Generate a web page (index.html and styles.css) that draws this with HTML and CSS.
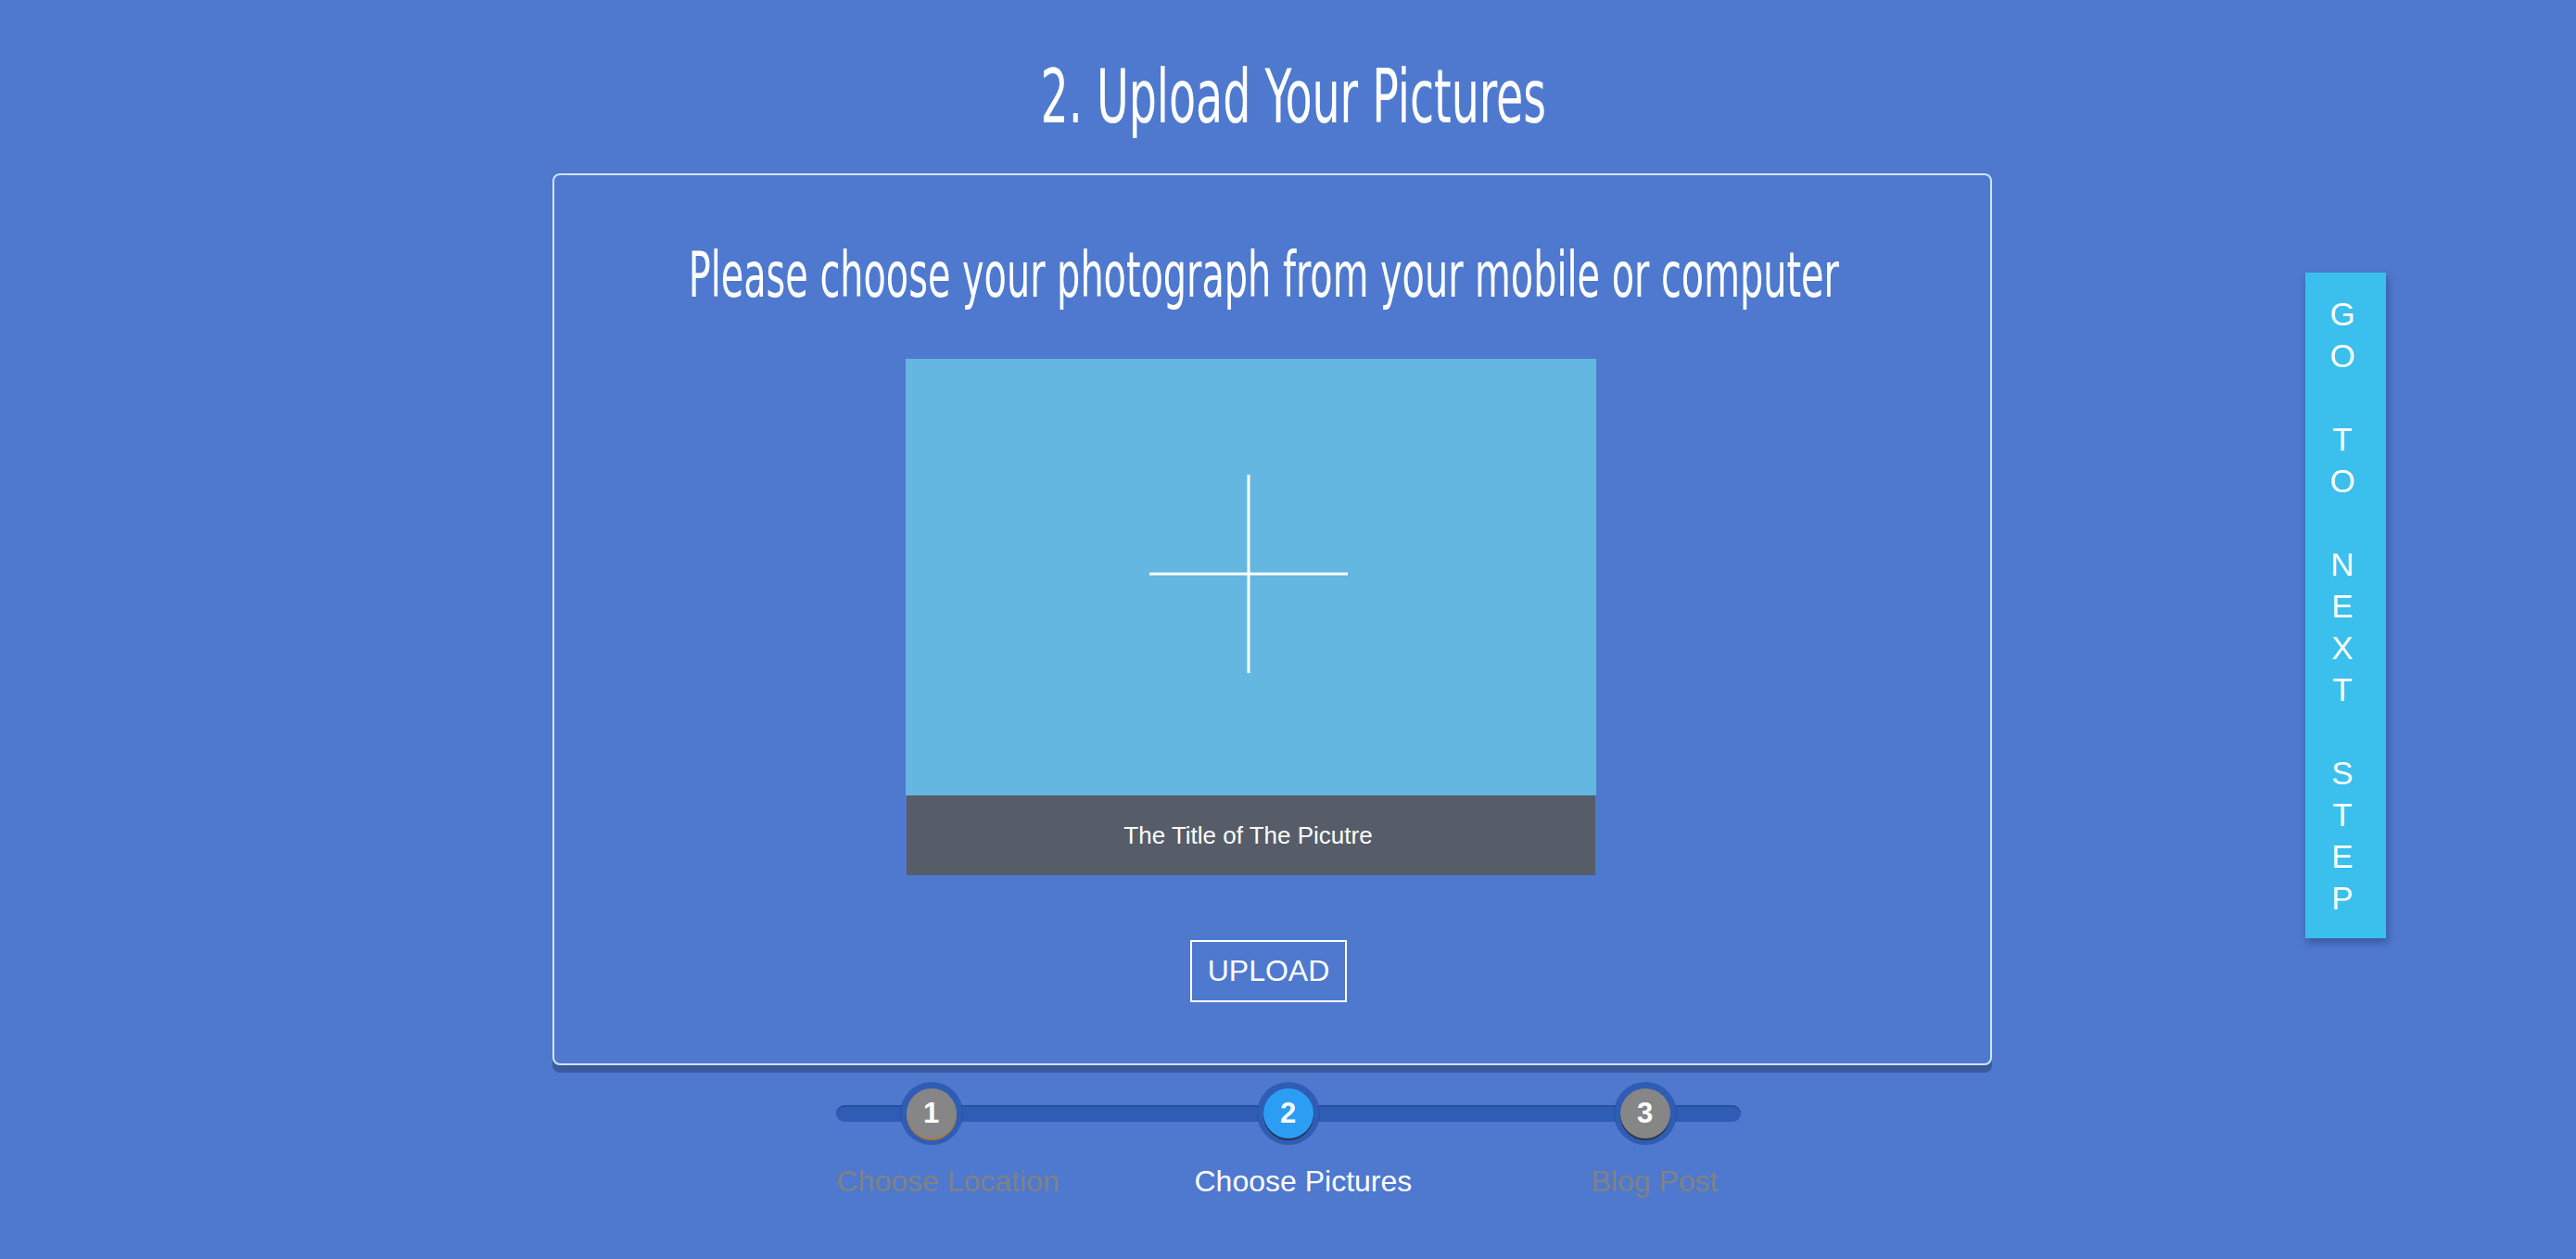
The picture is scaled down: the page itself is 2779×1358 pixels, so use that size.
FILE: index.html
```html
<!DOCTYPE html>
<html lang="en">
<head>
<meta charset="utf-8">
<title>Upload Your Pictures</title>
<link rel="stylesheet" href="styles.css">
</head>
<body>
<main class="page">
  <h1 class="page-title"><span class="condensed">2. Upload Your Pictures</span></h1>

  <section class="card">
    <h2 class="card-title"><span class="condensed">Please choose your photograph from your mobile or computer</span></h2>

    <div class="picture">
      <div class="picture-drop">
        <svg class="plus" width="214" height="214" viewBox="0 0 214 214" aria-hidden="true">
          <line x1="107" y1="0" x2="107" y2="214" stroke="#ffffff" stroke-width="3"/>
          <line x1="0" y1="107" x2="214" y2="107" stroke="#ffffff" stroke-width="3"/>
        </svg>
      </div>
      <div class="picture-caption">The Title of The Picutre</div>
    </div>

    <div class="upload-row">
      <button class="upload-btn" type="button">UPLOAD</button>
    </div>
  </section>

  <nav class="stepper">
    <div class="track">
      <div class="step done"><span>1</span></div>
      <div class="step active"><span>2</span></div>
      <div class="step"><span>3</span></div>
    </div>
    <div class="labels">
      <span class="label">Choose Location</span>
      <span class="label current">Choose Pictures</span>
      <span class="label">Blog Post</span>
    </div>
  </nav>

  <a class="next-step" href="#">
    <span>G</span><span>O</span><span></span>
    <span>T</span><span>O</span><span></span>
    <span>N</span><span>E</span><span>X</span><span>T</span><span></span>
    <span>S</span><span>T</span><span>E</span><span>P</span>
  </a>
</main>
</body>
</html>
```
FILE: styles.css
```css
html, body {
  margin: 0;
  padding: 0;
}

body {
  background: #4e79cf;
  color: #ffffff;
  font-family: "Liberation Sans", Arial, sans-serif;
  min-height: 1358px;
}

.page {
  position: relative;
  padding-top: 65px;
  min-height: 1293px;
}

.condensed {
  display: block;
  flex: none;
  font-family: "Liberation Sans Narrow", "DejaVu Sans Condensed", "Liberation Sans", sans-serif;
  font-stretch: condensed;
  transform: scaleX(0.66);
  transform-origin: center;
  white-space: nowrap;
}

.page-title {
  margin: 0;
  display: flex;
  justify-content: center;
  font-size: 80px;
  font-weight: normal;
  line-height: 80px;
  padding-left: 11px;
}

.card {
  box-sizing: border-box;
  width: 1553px;
  margin: 42px 0 0 596px;
  border: 2px solid #cfe5f6;
  border-radius: 8px;
  box-shadow: 0 8px 0 #3a5a9b;
  padding: 75px 0 66px;
}

.card-title {
  margin: 0;
  display: flex;
  justify-content: center;
  font-size: 67px;
  font-weight: normal;
  line-height: 67px;
  padding-right: 19px;
}

.picture {
  width: 745px;
  margin: 56px 0 0 379px;
}

.picture-drop {
  height: 471px;
  background: #64b7e0;
  display: flex;
  align-items: center;
  justify-content: center;
}

.plus {
  display: block;
  margin: -8px 6px 0 0;
}

.picture-caption {
  height: 86px;
  margin: 0 1px;
  background: #565d69;
  color: #ffffff;
  font-size: 26px;
  display: flex;
  align-items: center;
  justify-content: center;
  padding-right: 6px;
}

.upload-row {
  display: flex;
  justify-content: center;
  margin-top: 70px;
  padding-right: 8px;
}

.upload-btn {
  box-sizing: border-box;
  width: 169px;
  height: 67px;
  background: transparent;
  border: 2px solid #ffffff;
  border-radius: 0;
  color: #ffffff;
  font-family: "Liberation Sans", Arial, sans-serif;
  font-size: 32px;
  padding: 0;
  cursor: pointer;
}

.stepper {
  width: 976px;
  margin: 19px auto 0;
}

.track {
  position: relative;
  height: 66px;
  padding: 0 70px;
  display: flex;
  justify-content: space-between;
  align-items: center;
}

.track::before {
  content: "";
  position: absolute;
  left: 0;
  right: 0;
  top: 24px;
  height: 18px;
  border-radius: 9px;
  background: #2f5db5;
  box-shadow: inset 0 2px 0 rgba(20, 40, 100, 0.25);
}

.step {
  position: relative;
  box-sizing: border-box;
  width: 66px;
  height: 66px;
  border-radius: 50%;
  background: #2f5db5;
  box-shadow: 0 0 0 1px rgba(40, 75, 150, 0.6);
  display: flex;
  align-items: center;
  justify-content: center;
}

.step span {
  width: 54px;
  height: 54px;
  border-radius: 50%;
  background: #868686;
  box-shadow: 0 2px 0 #2b3340;
  color: #ffffff;
  font-weight: bold;
  font-size: 31px;
  display: flex;
  align-items: center;
  justify-content: center;
}

.step.done span {
  box-shadow: 0 2px 0 #b07a30;
}

.step.active span {
  background: #2b9ef4;
  box-shadow: 0 2px 0 #22324d;
}

.labels {
  display: grid;
  grid-template-columns: 384px 430px 1fr;
  margin-top: 22px;
  font-size: 32px;
  line-height: 37px;
}

.label {
  color: #808282;
  white-space: nowrap;
  padding-left: 1px;
}

.label.current {
  color: #ffffff;
  padding-left: 3px;
}

.next-step {
  position: absolute;
  top: 294px;
  left: 2487px;
  box-sizing: border-box;
  width: 87px;
  height: 718px;
  padding-top: 22px;
  background: #3bbfec;
  box-shadow: 2px 5px 8px rgba(20, 30, 70, 0.35);
  color: #ffffff;
  text-decoration: none;
  display: flex;
  flex-direction: column;
  align-items: center;
  font-size: 35px;
  padding-right: 7px;
}

.next-step span {
  display: block;
  height: 45px;
  line-height: 45px;
}
```
